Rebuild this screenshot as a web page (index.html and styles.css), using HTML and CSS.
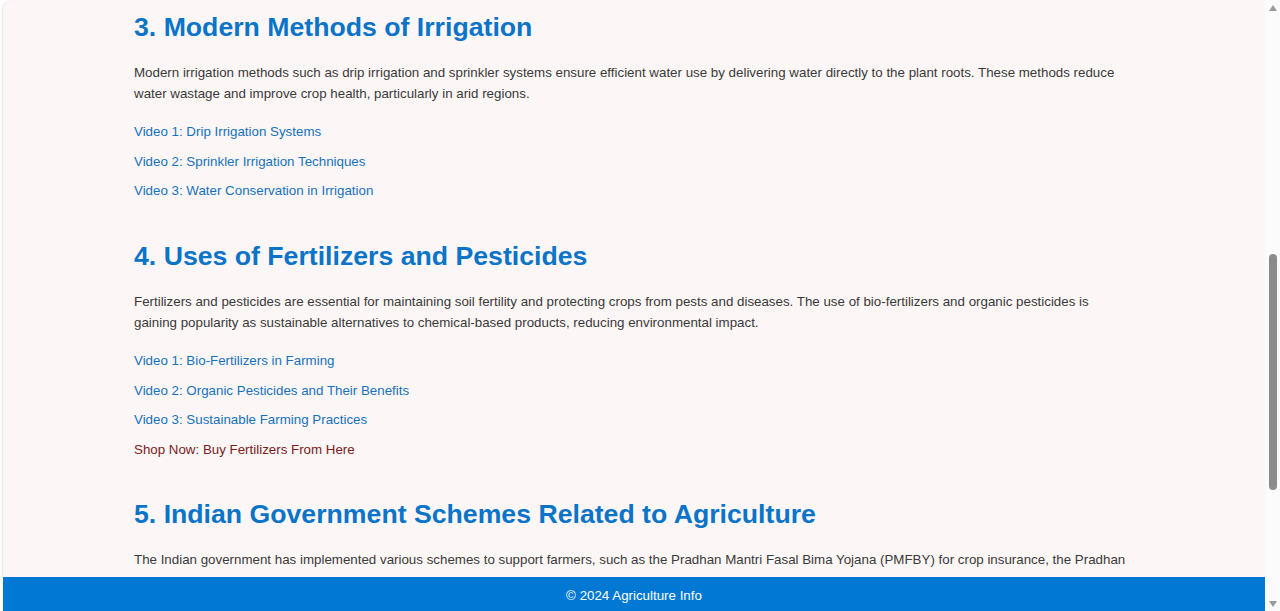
FILE: index.html
```html
<!DOCTYPE html>
<html lang="en">
<head>
<meta charset="utf-8">
<title>Agriculture Info</title>
<link rel="stylesheet" href="styles.css">
</head>
<body>
<div class="page">
  <div class="main">
    <div class="card">
      <div class="content">
        <section class="topic">
          <h2>3. Modern Methods of Irrigation</h2>
          <p>Modern irrigation methods such as drip irrigation and sprinkler systems ensure efficient water use by delivering water directly to the plant roots. These methods reduce water wastage and improve crop health, particularly in arid regions.</p>
          <div class="links">
            <a href="#">Video 1: Drip Irrigation Systems</a>
            <a href="#">Video 2: Sprinkler Irrigation Techniques</a>
            <a href="#">Video 3: Water Conservation in Irrigation</a>
          </div>
        </section>
        <section class="topic">
          <h2>4. Uses of Fertilizers and Pesticides</h2>
          <p>Fertilizers and pesticides are essential for maintaining soil fertility and protecting crops from pests and diseases. The use of bio-fertilizers and organic pesticides is gaining popularity as sustainable alternatives to chemical-based products, reducing environmental impact.</p>
          <div class="links">
            <a href="#">Video 1: Bio-Fertilizers in Farming</a>
            <a href="#">Video 2: Organic Pesticides and Their Benefits</a>
            <a href="#">Video 3: Sustainable Farming Practices</a>
            <a href="#" class="shop">Shop Now: Buy Fertilizers From Here</a>
          </div>
        </section>
        <section class="topic">
          <h2>5. Indian Government Schemes Related to Agriculture</h2>
          <p>The Indian government has implemented various schemes to support farmers, such as the Pradhan Mantri Fasal Bima Yojana (PMFBY) for crop insurance, the Pradhan Mantri Krishi Sinchai Yojana (PMKSY) for irrigation, and the Kisan Credit Card (KCC) scheme for easy access to credit. These initiatives aim to improve the income and livelihood of farmers.</p>
        </section>
      </div>
    </div>
    <footer class="footer">© 2024 Agriculture Info</footer>
  </div>
  <div class="scrollbar">
    <svg class="arrow" width="8" height="6" viewBox="0 0 8 6"><polygon points="4,0 8,6 0,6" fill="#9a9a9a"/></svg>
    <div class="thumb"></div>
    <svg class="arrow down" width="8" height="6" viewBox="0 0 8 6"><polygon points="0,0 8,0 4,6" fill="#9a9a9a"/></svg>
  </div>
</div>
</body>
</html>
```

FILE: styles.css
```css
html, body {
  margin: 0;
  padding: 0;
  height: 100%;
  overflow: hidden;
  background: #ffffff;
  font-family: "Liberation Sans", Arial, sans-serif;
}

.page {
  display: flex;
  height: 100vh;
}

.main {
  flex: 1;
  display: flex;
  flex-direction: column;
  padding-left: 3px;
  min-width: 0;
}

.card {
  flex: 1;
  overflow: hidden;
  background: #fcf6f6;
  border-top-left-radius: 10px;
  box-shadow: -1px 0 2px rgba(0, 0, 0, 0.10);
}

.content {
  max-width: 1000px;
  margin: 0 auto;
  padding-top: 11px;
}

.topic {
  margin-bottom: 38.3px;
}

.topic h2 {
  margin: 0 0 19px;
  font-size: 26.67px;
  line-height: 32px;
  font-weight: bold;
  color: #0a74c8;
}

.topic p {
  margin: 0 0 16.3px;
  font-size: 13.33px;
  line-height: 21.33px;
  color: #3a3a3a;
}

.links {
  display: flex;
  flex-direction: column;
  align-items: flex-start;
  gap: 8.33px;
}

.links a {
  font-size: 13.33px;
  line-height: 21.33px;
  color: #1572bd;
  text-decoration: none;
}

.links a.shop {
  color: #7a1c1c;
}

.footer {
  height: 34px;
  box-sizing: border-box;
  padding-top: 3px;
  line-height: 31px;
  background: #0078d4;
  color: #ffffff;
  text-align: center;
  font-size: 13.33px;
}

.scrollbar {
  width: 15px;
  flex: none;
  background: #fbfbfb;
  display: flex;
  flex-direction: column;
  align-items: center;
  padding-top: 5px;
  padding-bottom: 4px;
  box-sizing: border-box;
}

.arrow {
  display: block;
  flex: none;
}

.thumb {
  width: 8px;
  height: 236px;
  margin-top: 243px;
  border-radius: 4px;
  background: #8c8c8c;
}

.arrow.down {
  margin-top: auto;
}
```
